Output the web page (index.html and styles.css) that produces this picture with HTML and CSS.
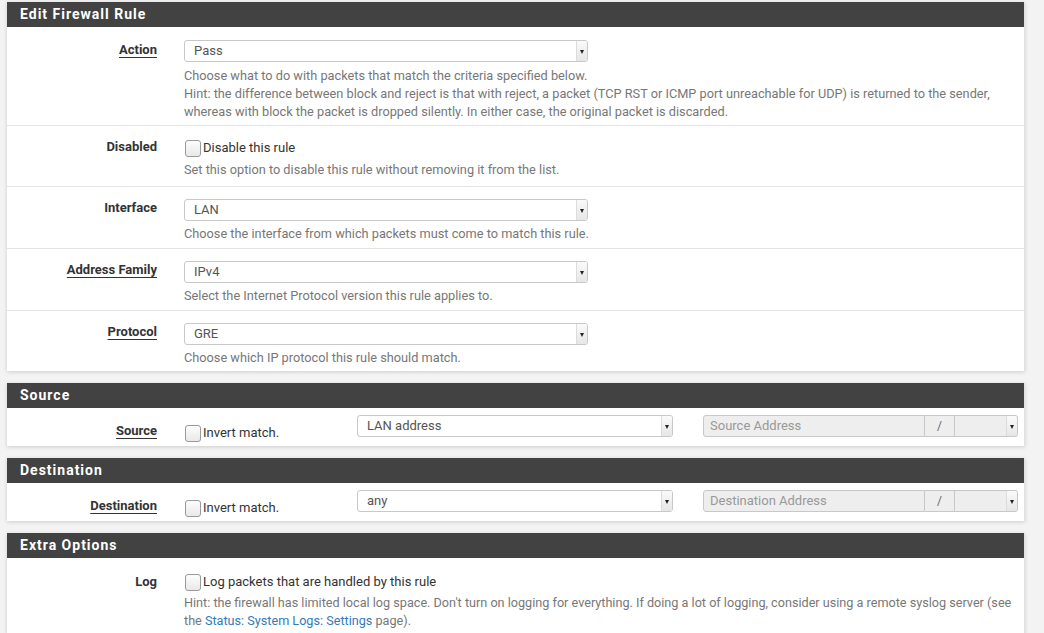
FILE: index.html
```html
<!DOCTYPE html>
<html lang="en">
<head>
<meta charset="utf-8">
<title>Edit Firewall Rule</title>
<link rel="stylesheet" href="styles.css">
</head>
<body>
<div class="panel">
  <div class="panel-heading">Edit Firewall Rule</div>
  <div class="panel-body">
    <div class="row">
      <div class="label"><span class="req">Action</span></div>
      <div class="ctrl">
        <div class="select w404"><span class="val">Pass</span><span class="arrow"></span></div>
        <div class="help help-first">Choose what to do with packets that match the criteria specified below.<br>Hint: the difference between block and reject is that with reject, a packet (TCP RST or ICMP port unreachable for UDP) is returned to the sender,<br>whereas with block the packet is dropped silently. In either case, the original packet is discarded.</div>
      </div>
    </div>
    <div class="row check-row">
      <div class="label">Disabled</div>
      <div class="ctrl">
        <label class="check"><span class="box"></span>Disable this rule</label>
        <div class="help">Set this option to disable this rule without removing it from the list.</div>
      </div>
    </div>
    <div class="row">
      <div class="label">Interface</div>
      <div class="ctrl">
        <div class="select w404"><span class="val">LAN</span><span class="arrow"></span></div>
        <div class="help">Choose the interface from which packets must come to match this rule.</div>
      </div>
    </div>
    <div class="row">
      <div class="label"><span class="req">Address Family</span></div>
      <div class="ctrl">
        <div class="select w404"><span class="val">IPv4</span><span class="arrow"></span></div>
        <div class="help">Select the Internet Protocol version this rule applies to.</div>
      </div>
    </div>
    <div class="row">
      <div class="label"><span class="req">Protocol</span></div>
      <div class="ctrl">
        <div class="select w404"><span class="val">GRE</span><span class="arrow"></span></div>
        <div class="help">Choose which IP protocol this rule should match.</div>
      </div>
    </div>
  </div>
</div>

<div class="panel">
  <div class="panel-heading">Source</div>
  <div class="panel-body">
    <div class="addr-row">
      <div class="label"><span class="req">Source</span></div>
      <div class="addr-check"><label class="check"><span class="box"></span>Invert match.</label></div>
      <div class="select w316"><span class="val">LAN address</span><span class="arrow"></span></div>
      <div class="addr-group">
        <div class="addr-input">Source Address</div>
        <div class="addr-slash">/</div>
        <div class="addr-mask"><span class="val"></span><span class="arrow"></span></div>
      </div>
    </div>
  </div>
</div>

<div class="panel">
  <div class="panel-heading">Destination</div>
  <div class="panel-body">
    <div class="addr-row">
      <div class="label"><span class="req">Destination</span></div>
      <div class="addr-check"><label class="check"><span class="box"></span>Invert match.</label></div>
      <div class="select w316"><span class="val">any</span><span class="arrow"></span></div>
      <div class="addr-group">
        <div class="addr-input">Destination Address</div>
        <div class="addr-slash">/</div>
        <div class="addr-mask"><span class="val"></span><span class="arrow"></span></div>
      </div>
    </div>
  </div>
</div>

<div class="panel">
  <div class="panel-heading">Extra Options</div>
  <div class="panel-body">
    <div class="row check-row log-row">
      <div class="label">Log</div>
      <div class="ctrl">
        <label class="check"><span class="box"></span>Log packets that are handled by this rule</label>
        <div class="help help-log">Hint: the firewall has limited local log space. Don't turn on logging for everything. If doing a lot of logging, consider using a remote syslog server (see<br>the <a href="#">Status: System Logs: Settings</a> page).</div>
      </div>
    </div>
  </div>
</div>
</body>
</html>
```

FILE: styles.css
```css
* { box-sizing: border-box; }

html, body { height: 100%; }

body {
  margin: 0;
  padding: 2px 19px 0 7px;
  background: #f3f3f3;
  font-family: Roboto, "Liberation Sans", Arial, sans-serif;
  color: #333;
  overflow: hidden;
}

.panel {
  background: #fff;
  margin-bottom: 12px;
  box-shadow: 0 1px 4px rgba(0, 0, 0, 0.16);
  border-right: 1px solid #e2e2e2;
}

.panel-heading {
  background: #424242;
  color: #fff;
  height: 25px;
  line-height: 25px;
  padding: 0 13px;
  font-size: 14px;
  font-weight: 700;
  letter-spacing: 1px;
}

.row {
  display: grid;
  grid-template-columns: 177px 1fr;
  padding: 12px 10px 5px 0;
  border-top: 1px solid #e4e4e4;
}

.row:first-child {
  border-top: 0;
  padding-top: 13px;
  padding-bottom: 4px;
}

.row:last-child {
  padding-bottom: 4px;
}

.label {
  text-align: right;
  padding-right: 27px;
  font-size: 13px;
  font-weight: 700;
  line-height: 18px;
  padding-top: 0;
  color: #333;
}

.row:first-child .label {
  padding-top: 1px;
}

.req {
  text-decoration: underline;
  text-underline-offset: 3px;
  text-decoration-thickness: 1px;
}

.ctrl { min-width: 0; }

.select {
  display: flex;
  height: 22px;
  border: 1px solid #c8c8c8;
  border-radius: 3px;
  background: #fff;
  overflow: hidden;
}

.w404 { width: 404px; }
.w316 { width: 316px; }

.val {
  flex: 1;
  padding-left: 9px;
  font-size: 13px;
  line-height: 20px;
  color: #555;
}

.arrow {
  width: 11px;
  display: flex;
  align-items: center;
  justify-content: center;
  background: linear-gradient(#fafafa, #e6e6e6);
  border-left: 1px solid #dcdcdc;
}

.arrow::after {
  content: "";
  border-top: 4px solid #222;
  border-left: 2.5px solid transparent;
  border-right: 2.5px solid transparent;
  margin-top: 1px;
}

.help {
  margin-top: 4px;
  font-size: 12.75px;
  line-height: 18px;
  color: #777;
  white-space: nowrap;
}

.help-first { margin-top: 5px; }

.help-log { font-size: 12.65px; }

.help a {
  color: #337ab7;
  text-decoration: none;
}

.check-row {
  padding-top: 11px;
  padding-bottom: 7px;
}

.check-row .label {
  line-height: 20px;
  padding-top: 0;
}

.check {
  display: flex;
  align-items: center;
  height: 20px;
  font-size: 13px;
  color: #333;
}

.box {
  width: 16px;
  height: 17px;
  border: 1px solid #9a9a9a;
  border-radius: 3px;
  background: linear-gradient(#fdfdfd, #e9e9e9);
  margin: 2px 2px 0 1px;
  flex: none;
}

.log-row { padding-top: 11px; }
.log-row .help { margin-top: 3px; }

.addr-row {
  display: flex;
  align-items: flex-start;
  padding: 7px 0 4px 0;
}

.addr-row .label {
  width: 177px;
  flex: none;
  padding-top: 6px;
  line-height: 20px;
}

.addr-check {
  width: 173px;
  flex: none;
  padding-top: 7px;
}

.addr-row .select { flex: none; }

.addr-group {
  display: flex;
  width: 315px;
  height: 22px;
  margin-left: 30px;
  flex: none;
}

.addr-input {
  width: 222px;
  border: 1px solid #c8c8c8;
  border-radius: 3px 0 0 3px;
  background: #eee;
  color: #999;
  font-size: 13px;
  line-height: 20px;
  padding-left: 6px;
}

.addr-slash {
  width: 30px;
  border: 1px solid #c8c8c8;
  border-left: 0;
  background: #eee;
  color: #666;
  font-size: 12px;
  line-height: 20px;
  text-align: center;
}

.addr-mask {
  flex: 1;
  display: flex;
  border: 1px solid #c8c8c8;
  border-left: 0;
  border-radius: 0 3px 3px 0;
  background: #eee;
  overflow: hidden;
}
```
